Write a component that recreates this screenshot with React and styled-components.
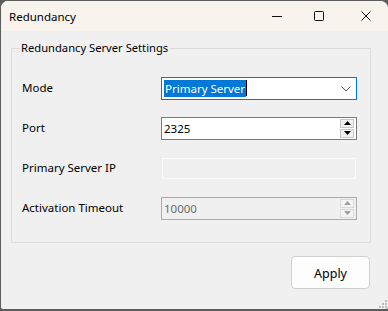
import React from "react";
import styled, { createGlobalStyle } from "styled-components";

const Global = createGlobalStyle`
  html, body { margin: 0; padding: 0; background: #5c5c5c; }
  body { font-family: "Segoe UI", "Noto Sans", "Open Sans", sans-serif; }
  #root { width: 388px; height: 311px; }
`;

const Window = styled.div`
  position: relative;
  box-sizing: border-box;
  width: 388px;
  height: 311px;
  background: #f0f0f0;
  border: 1px solid #5c5c5c;
  border-right: none;
  border-bottom-width: 2px;
  border-radius: 8px 8px 3px 4px;
  overflow: hidden;
  display: flex;
  flex-direction: column;
  font-size: 11px;
  color: #000;
`;

const TitleBar = styled.div`
  height: 30px;
  flex: none;
  background: #f8f3ed;
  display: flex;
  align-items: center;
`;

const Title = styled.div`
  flex: 1;
  padding-left: 8px;
  padding-top: 1px;
  font-size: 11.5px;
  line-height: 16px;
`;

const Caption = styled.div`
  width: ${(p) => p.$w}px;
  height: 30px;
  display: flex;
  align-items: center;
  justify-content: center;
`;

const Group = styled.div`
  position: relative;
  margin: 17px 17px 0 10px;
  border: 1px solid #dcdcdc;
  padding: 19px 13px 14px 10px;
  display: grid;
  grid-template-columns: 139px 196px;
  grid-auto-rows: 40px;
  align-items: center;
`;

const Legend = styled.div`
  position: absolute;
  top: -9px;
  left: 8px;
  padding: 0 1px;
  background: #f0f0f0;
  line-height: 16px;
  font-size: 11.2px;
`;

const Label = styled.div`
  font-size: 11.5px;
  line-height: 16px;
`;

const Field = styled.div`
  box-sizing: border-box;
  position: relative;
  height: ${(p) => p.$h || 23}px;
  width: ${(p) => p.$w || 196}px;
  margin-left: ${(p) => p.$ml || 0}px;
  border: 1px solid ${(p) => p.$border};
  background: ${(p) => p.$bg};
  display: flex;
  align-items: center;
  padding-left: 2px;
  font-size: 11.5px;
  color: ${(p) => p.$color || "#000"};
`;

const Selected = styled.span`
  background: #0078d7;
  color: #fff;
  line-height: 17px;
  padding: 0 1px 0 1px;
`;

const Caret = styled.span`
  width: 1px;
  height: 16px;
  background: #000;
`;

const Chevron = styled.svg`
  position: absolute;
  right: 5px;
  top: 8px;
`;

const Spin = styled.div`
  position: absolute;
  right: 2px;
  top: 1px;
  bottom: 1px;
  width: 14px;
  display: flex;
  flex-direction: column;
  gap: 1px;
`;

const SpinBtn = styled.div`
  flex: 1;
  box-sizing: border-box;
  border: 1px solid ${(p) => (p.$disabled ? "#dadada" : "#c8c8c8")};
  background: ${(p) => (p.$disabled ? "#f4f4f4" : "#f0f0f0")};
  display: flex;
  align-items: center;
  justify-content: center;
`;

const Footer = styled.div`
  display: flex;
  justify-content: flex-end;
  padding: 13px 18px 0 0;
`;

const Button = styled.button`
  box-sizing: border-box;
  width: 79px;
  height: 33px;
  border: 1px solid #d0d0d0;
  border-radius: 4px;
  background: #fdfdfd;
  font-family: "Segoe UI", "Noto Sans", "Open Sans", sans-serif;
  font-size: 12.5px;
  color: #000;
  padding: 1px 0 0 0;
`;

const Grip = styled.svg`
  position: absolute;
  right: 1px;
  bottom: 1px;
`;

const Tri = ({ up, color }) => (
  <svg width="7" height="4" viewBox="0 0 7 4">
    {up ? (
      <polygon points="0,4 7,4 3.5,0" fill={color} />
    ) : (
      <polygon points="0,0 7,0 3.5,4" fill={color} />
    )}
  </svg>
);

export default function App() {
  return (
    <>
      <Global />
      <Window>
        <TitleBar>
          <Title>Redundancy</Title>
          <Caption $w={34}>
            <svg width="10" height="10" viewBox="0 0 10 10">
              <line x1="0" y1="5.5" x2="10" y2="5.5" stroke="#111" strokeWidth="1" />
            </svg>
          </Caption>
          <Caption $w={50}>
            <svg width="10" height="10" viewBox="0 0 10 10">
              <rect x="0.5" y="0.5" width="9" height="9" rx="1" fill="none" stroke="#111" strokeWidth="1" />
            </svg>
          </Caption>
          <Caption $w={44}>
            <svg width="10" height="10" viewBox="0 0 10 10">
              <path d="M0.5 0.5 L9.5 9.5 M9.5 0.5 L0.5 9.5" stroke="#111" strokeWidth="1" />
            </svg>
          </Caption>
        </TitleBar>

        <Group>
          <Legend>Redundancy Server Settings</Legend>

          <Label>Mode</Label>
          <Field $border="#0078d7" $bg="#fff">
            <Selected>Primary Server</Selected>
            <Caret />
            <Chevron width="10" height="6" viewBox="0 0 10 6">
              <polyline points="0.5,0.5 5,5 9.5,0.5" fill="none" stroke="#555" strokeWidth="1" />
            </Chevron>
          </Field>

          <Label>Port</Label>
          <Field $border="#7a7a7a" $bg="#fff">
            2325
            <Spin>
              <SpinBtn><Tri up color="#000" /></SpinBtn>
              <SpinBtn><Tri color="#000" /></SpinBtn>
            </Spin>
          </Field>

          <Label>Primary Server IP</Label>
          <Field $border="#fbfbfb" $bg="#f0f0f0" $h={21} $w={194} $ml={1} />

          <Label>Activation Timeout</Label>
          <Field $border="#ababab" $bg="#f0f0f0" $h={23} $color="#6d6d6d">
            10000
            <Spin>
              <SpinBtn $disabled><Tri up color="#a0a0a0" /></SpinBtn>
              <SpinBtn $disabled><Tri color="#a0a0a0" /></SpinBtn>
            </Spin>
          </Field>
        </Group>

        <Footer>
          <Button>Apply</Button>
        </Footer>

        <Grip width="10" height="10" viewBox="0 0 10 10">
          {[
            [8, 0], [8, 3], [5, 3], [8, 6], [5, 6], [2, 6],
          ].map(([x, y], i) => (
            <rect key={i} x={x} y={y + 2} width="2" height="2" fill="#bdbdbd" />
          ))}
        </Grip>
      </Window>
    </>
  );
}
